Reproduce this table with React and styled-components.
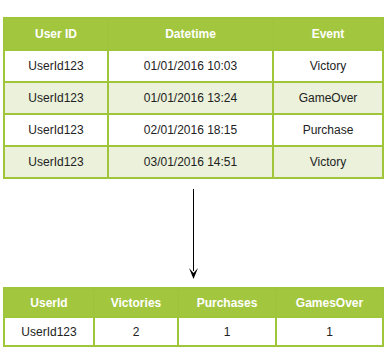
import React from 'react'
import styled, { createGlobalStyle } from 'styled-components'

const GlobalStyle = createGlobalStyle`
  body {
    margin: 0;
    background: #ffffff;
    font-family: "Liberation Sans", Arial, sans-serif;
  }
`

const Page = styled.div`
  width: 389px;
  height: 358px;
  padding: 17px 0 0 3px;
  box-sizing: border-box;
  display: flex;
  flex-direction: column;
`

const Table = styled.table`
  width: 379px;
  border-collapse: collapse;
  table-layout: fixed;
  font-size: 12px;
  color: #222222;
  border: 2px solid #9fc63b;

  th,
  td {
    border: 2px solid #9fc63b;
    text-align: center;
    padding: 0;
  }

  th {
    background: #a3c63f;
    color: #ffffff;
    font-weight: bold;
    height: ${(p) => p.$headH}px;
  }

  td {
    height: ${(p) => p.$rowH}px;
  }

  tbody tr:nth-child(even) td {
    background: #ebf1da;
  }
`

const Col = styled.col`
  width: ${(p) => p.$w}px;
`

const ArrowWrap = styled.div`
  display: flex;
  padding: 10px 0 8px 185px;
`

const events = [
  ['UserId123', '01/01/2016 10:03', 'Victory'],
  ['UserId123', '01/01/2016 13:24', 'GameOver'],
  ['UserId123', '02/01/2016 18:15', 'Purchase'],
  ['UserId123', '03/01/2016 14:51', 'Victory'],
]

const Arrow = () => (
  <svg width="12" height="90" viewBox="0 0 12 90">
    <line x1="5.5" y1="0" x2="5.5" y2="82" stroke="#000" strokeWidth="1" />
    <path d="M1 79 L5.5 84 L10 79 L5.5 90 Z" fill="#000" />
  </svg>
)

export default function App() {
  return (
    <Page>
      <GlobalStyle />
      <Table $headH={30} $rowH={30}>
        <colgroup>
          <Col $w={104} />
          <Col $w={165} />
          <Col $w={110} />
        </colgroup>
        <thead>
          <tr>
            <th>User ID</th>
            <th>Datetime</th>
            <th>Event</th>
          </tr>
        </thead>
        <tbody>
          {events.map((r, i) => (
            <tr key={i}>
              {r.map((c, j) => (
                <td key={j}>{c}</td>
              ))}
            </tr>
          ))}
        </tbody>
      </Table>
      <ArrowWrap>
        <Arrow />
      </ArrowWrap>
      <Table $headH={27} $rowH={27}>
        <colgroup>
          <Col $w={90} />
          <Col $w={84} />
          <Col $w={98} />
          <Col $w={107} />
        </colgroup>
        <thead>
          <tr>
            <th>UserId</th>
            <th>Victories</th>
            <th>Purchases</th>
            <th>GamesOver</th>
          </tr>
        </thead>
        <tbody>
          <tr>
            <td>UserId123</td>
            <td>2</td>
            <td>1</td>
            <td>1</td>
          </tr>
        </tbody>
      </Table>
    </Page>
  )
}
